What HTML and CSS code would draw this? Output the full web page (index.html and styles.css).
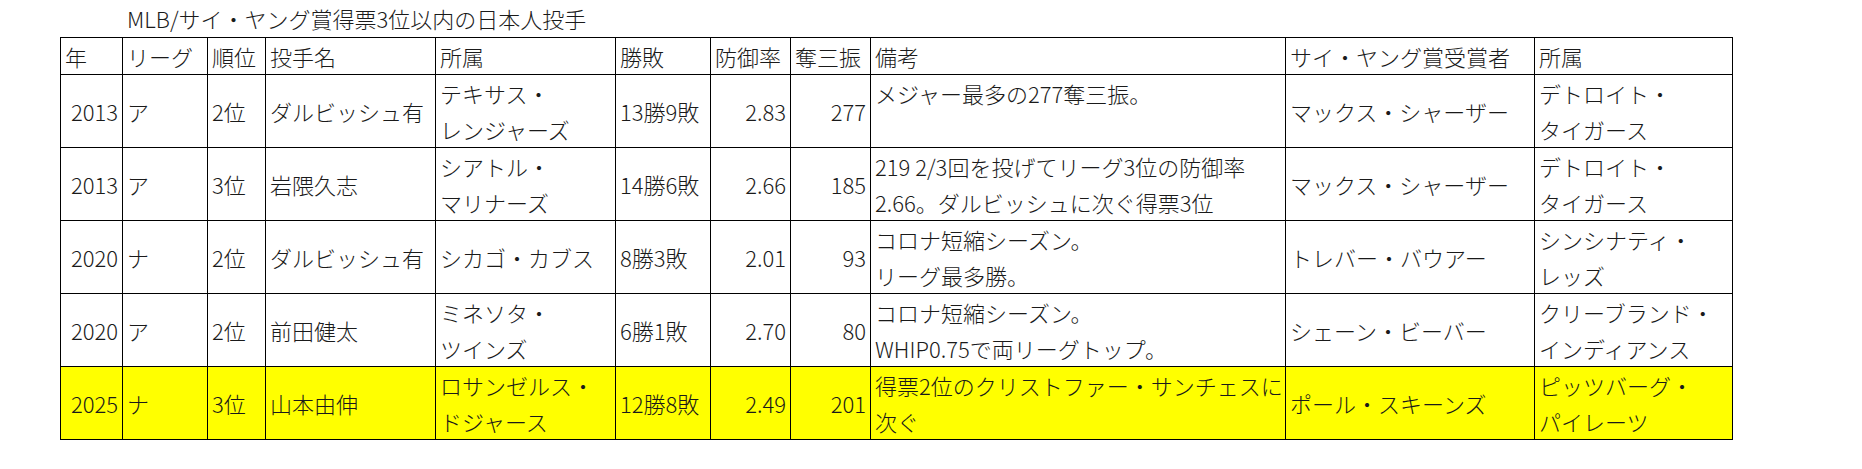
FILE: index.html
```html
<!DOCTYPE html>
<html lang="ja">
<head>
<meta charset="utf-8">
<title>MLB/サイ・ヤング賞得票3位以内の日本人投手</title>
<link rel="stylesheet" href="styles.css">
</head>
<body>
<div class="page">
  <div class="title">MLB/サイ・ヤング賞得票3位以内の日本人投手</div>
  <table class="sheet">
    <colgroup>
      <col class="c-year"><col class="c-league"><col class="c-rank"><col class="c-name"><col class="c-team">
      <col class="c-wl"><col class="c-era"><col class="c-so"><col class="c-note"><col class="c-winner"><col class="c-wteam">
    </colgroup>
    <thead>
      <tr class="head">
        <td>年</td><td>リーグ</td><td>順位</td><td>投手名</td><td>所属</td>
        <td>勝敗</td><td>防御率</td><td>奪三振</td><td>備考</td><td>サイ・ヤング賞受賞者</td><td>所属</td>
      </tr>
    </thead>
    <tbody>
      <tr>
        <td class="num">2013</td><td>ア</td><td>2位</td><td>ダルビッシュ有</td><td>テキサス・<br>レンジャーズ</td>
        <td>13勝9敗</td><td class="num">2.83</td><td class="num">277</td><td class="note">メジャー最多の277奪三振。</td><td>マックス・シャーザー</td><td>デトロイト・<br>タイガース</td>
      </tr>
      <tr>
        <td class="num">2013</td><td>ア</td><td>3位</td><td>岩隈久志</td><td>シアトル・<br>マリナーズ</td>
        <td>14勝6敗</td><td class="num">2.66</td><td class="num">185</td><td class="note">219 2/3回を投げてリーグ3位の防御率<br>2.66。ダルビッシュに次ぐ得票3位</td><td>マックス・シャーザー</td><td>デトロイト・<br>タイガース</td>
      </tr>
      <tr>
        <td class="num">2020</td><td>ナ</td><td>2位</td><td>ダルビッシュ有</td><td>シカゴ・カブス</td>
        <td>8勝3敗</td><td class="num">2.01</td><td class="num">93</td><td class="note">コロナ短縮シーズン。<br>リーグ最多勝。</td><td>トレバー・バウアー</td><td>シンシナティ・<br>レッズ</td>
      </tr>
      <tr>
        <td class="num">2020</td><td>ア</td><td>2位</td><td>前田健太</td><td>ミネソタ・<br>ツインズ</td>
        <td>6勝1敗</td><td class="num">2.70</td><td class="num">80</td><td class="note">コロナ短縮シーズン。<br>WHIP0.75で両リーグトップ。</td><td>シェーン・ビーバー</td><td>クリーブランド・<br>インディアンス</td>
      </tr>
      <tr class="hl">
        <td class="num">2025</td><td>ナ</td><td>3位</td><td>山本由伸</td><td>ロサンゼルス・<br>ドジャース</td>
        <td>12勝8敗</td><td class="num">2.49</td><td class="num">201</td><td class="note">得票2位のクリストファー・サンチェスに<br>次ぐ</td><td>ポール・スキーンズ</td><td>ピッツバーグ・<br>パイレーツ</td>
      </tr>
    </tbody>
  </table>
</div>
</body>
</html>
```

FILE: styles.css
```css
html, body {
  margin: 0;
  padding: 0;
  background: #ffffff;
}

body {
  font-family: "Noto Sans CJK JP", "Noto Sans", sans-serif;
  font-size: 22px;
  font-weight: 300;
  color: #1a1a1a;
}

.page {
  padding-left: 60px;
}

.title {
  height: 37px;
  line-height: 36px;
  padding-left: 67px;
  white-space: nowrap;
}

.sheet {
  border-collapse: collapse;
  table-layout: fixed;
  width: 1672px;
}

.c-year { width: 62px; }
.c-league { width: 85px; }
.c-rank { width: 58px; }
.c-name { width: 170px; }
.c-team { width: 180px; }
.c-wl { width: 95px; }
.c-era { width: 80px; }
.c-so { width: 80px; }
.c-note { width: 415px; }
.c-winner { width: 249px; }
.c-wteam { width: 198px; }

.sheet td {
  border: 1px solid #000;
  padding: 0 4px;
  line-height: 36px;
  vertical-align: middle;
  white-space: nowrap;
  overflow: hidden;
}

.sheet .head td {
  height: 35px;
}

.sheet tbody td {
  height: 71px;
}

.sheet td.num {
  text-align: right;
  padding-right: 4px;
}

.sheet td.note {
  vertical-align: top;
}

.sheet tr.hl td {
  background: #ffff00;
}
```
